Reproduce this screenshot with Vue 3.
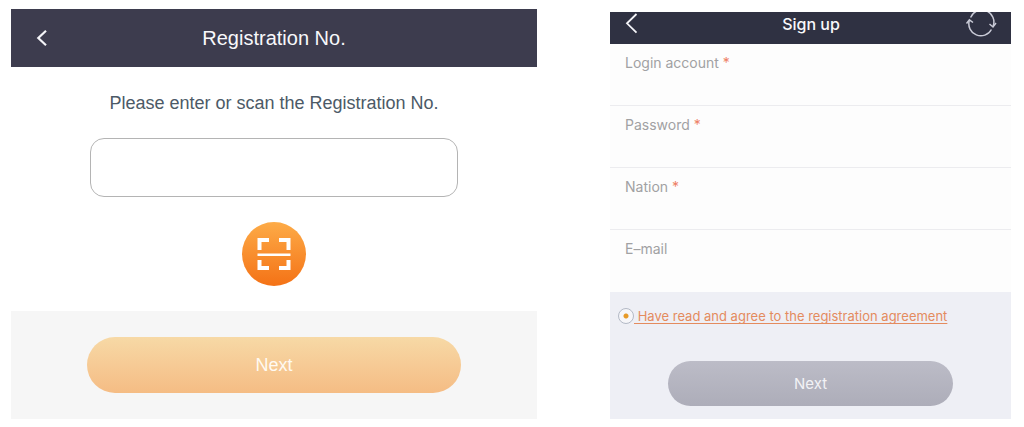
<script setup>
import { ref } from 'vue'

const registrationNo = ref('')
const agreed = ref(true)
const fields = ref([
  { id: 'login', label: 'Login account', type: 'text', required: true, value: '' },
  { id: 'password', label: 'Password', type: 'password', required: true, value: '' },
  { id: 'nation', label: 'Nation', type: 'text', required: true, value: '' },
  { id: 'email', label: 'E–mail', type: 'email', required: false, value: '' },
])
</script>

<template>
  <main class="screens">
    <section class="panel registration">
      <header class="bar">
        <button class="icon-btn" type="button" aria-label="Back">
          <svg width="12" height="18" viewBox="0 0 12 18" fill="none" stroke="#f4f4f8" stroke-width="2.2">
            <path d="M10 1.8 2.3 9 10 16.2" />
          </svg>
        </button>
        <h1>Registration No.</h1>
      </header>
      <form class="scan-form" @submit.prevent>
        <label for="registration-no">Please enter or scan the Registration No.</label>
        <input id="registration-no" v-model="registrationNo" type="text" />
        <button class="scan" type="button" aria-label="Scan">
          <svg width="64" height="64" viewBox="0 0 64 64" fill="none" stroke="#fff">
            <path stroke-width="4" d="M17.5 28V18H27M37 18h9.5V28M17.5 38v8H27M37 46h9.5V38" />
            <path stroke-width="2.6" d="M15.5 32.7h33" />
          </svg>
        </button>
      </form>
      <footer class="actions">
        <button class="next" type="button">Next</button>
      </footer>
    </section>

    <section class="panel signup">
      <header class="bar">
        <button class="icon-btn" type="button" aria-label="Back">
          <svg width="14" height="32" viewBox="0 0 14 32" fill="none" stroke="#f4f4f8" stroke-width="1.8">
            <path d="M11.5 2 2 11.3 11.5 20.6" />
          </svg>
        </button>
        <h2>Sign up</h2>
        <button class="icon-btn end" type="button" aria-label="Refresh">
          <svg width="32" height="32" viewBox="0 0 32 32" fill="none" stroke="#c9cad6" stroke-width="1.5">
            <path d="M5.6 5.5A12 12 0 0 1 28 14.5M26.4 17.5A12 12 0 0 1 4.3 8.5" />
            <path d="M1.5 11.5 4.4 7.8 8 10.5M24.5 12 28 15 31 11" />
          </svg>
        </button>
      </header>
      <form class="fields" @submit.prevent>
        <div v-for="field in fields" :key="field.id" class="field">
          <label :for="field.id">{{ field.label }} <span v-if="field.required" class="star">*</span></label>
          <input :id="field.id" v-model="field.value" :type="field.type" />
        </div>
      </form>
      <footer class="actions">
        <div class="agreement">
          <input v-model="agreed" type="radio" name="agreement" :value="true" aria-labelledby="agreement-link" />
          <a id="agreement-link" href="#agreement">&nbsp;Have read and agree to the registration agreement</a>
        </div>
        <button class="next" type="button">Next</button>
      </footer>
    </section>
  </main>
</template>

<style>
body {
  margin: 0;
  background: #fff;
}
</style>

<style scoped>
.screens {
  display: grid;
  grid-template-columns: 526fr 401fr;
  gap: 73px;
  align-items: end;
  padding: 9px 13px 8px 11px;
}

.panel {
  min-width: 0;
}

.bar {
  display: grid;
  grid-template-columns: 1fr auto 1fr;
  color: #f8f8fb;
}

.icon-btn {
  display: flex;
  justify-self: start;
  padding: 0;
  border: 0;
  background: none;
}

.end {
  justify-self: end;
}

h1,
h2 {
  margin: 0;
}

.next {
  display: block;
  width: 71%;
  margin: 0 auto;
  padding: 0;
  border: 0;
  border-radius: 28px;
}

.registration {
  font-family: "Liberation Sans", Arial, sans-serif;
}

.registration .bar {
  align-items: center;
  height: 58px;
  padding: 0 25px;
  background: #3d3c4e;
}

.registration h1 {
  font-size: 20px;
  font-weight: 400;
  line-height: 24px;
}

.scan-form {
  display: flex;
  flex-direction: column;
  align-items: center;
  padding: 24px 0 25px;
}

.scan-form label {
  color: #4c5a67;
  font-size: 18px;
  line-height: 24px;
}

.scan-form input {
  box-sizing: border-box;
  width: 70%;
  height: 59px;
  margin: 23px 0 25px;
  padding: 0 16px;
  border: 1px solid #b4b4b4;
  border-radius: 14px;
  background: #fff;
  font: inherit;
  font-size: 18px;
}

.scan {
  display: flex;
  padding: 0;
  border: 0;
  border-radius: 50%;
  background: linear-gradient(#fdab47, #f47216);
}

.registration .actions {
  padding: 26px 0;
  background: #f6f6f6;
}

.registration .next {
  height: 56px;
  background: linear-gradient(#f7d9a6, #f5bc84);
  color: #fffaf2;
  font: 18px "Liberation Sans", Arial, sans-serif;
}

.signup {
  font-family: Inter, "Noto Sans", sans-serif;
}

.signup .bar {
  height: 32px;
  padding: 0 14px 0 15px;
  background: #2f3142;
}

.signup h2 {
  font-size: 16px;
  font-weight: 500;
  line-height: 24px;
}

.fields {
  background: #fdfdfd;
}

.field {
  box-sizing: border-box;
  height: 62px;
  padding: 8px 15px 0;
  border-bottom: 1px solid #ececef;
}

.field:last-child {
  border-bottom: 0;
}

.field label {
  display: block;
  color: #a1a1a3;
  font-size: 14px;
  line-height: 22px;
}

.star {
  color: #ee8065;
}

.field input {
  display: block;
  width: 100%;
  height: 30px;
  padding: 0;
  border: 0;
  background: none;
  font: inherit;
  font-size: 14px;
}

.signup .actions {
  padding: 14px 0 13px;
  background: #eeeff5;
}

.agreement {
  display: flex;
  align-items: center;
  height: 20px;
  margin-bottom: 35px;
  padding-left: 8px;
}

.agreement input {
  flex: none;
  width: 16px;
  height: 16px;
  margin: 0;
  border: 1px solid #b4bac6;
  border-radius: 50%;
  background: #f6f6f9;
  appearance: none;
}

.agreement input:checked {
  background: radial-gradient(circle, #e79a28 2px, #f6f6f9 3px);
}

.agreement a {
  color: #e48b5e;
  font-size: 13px;
  line-height: 20px;
  text-decoration-skip-ink: none;
  text-decoration-thickness: 1px;
  text-underline-offset: 2px;
  white-space: nowrap;
}

.signup .next {
  height: 45px;
  background: linear-gradient(#bcbcc7, #adadb9);
  color: #f2f2f6;
  font: 15px Inter, "Noto Sans", sans-serif;
}
</style>
